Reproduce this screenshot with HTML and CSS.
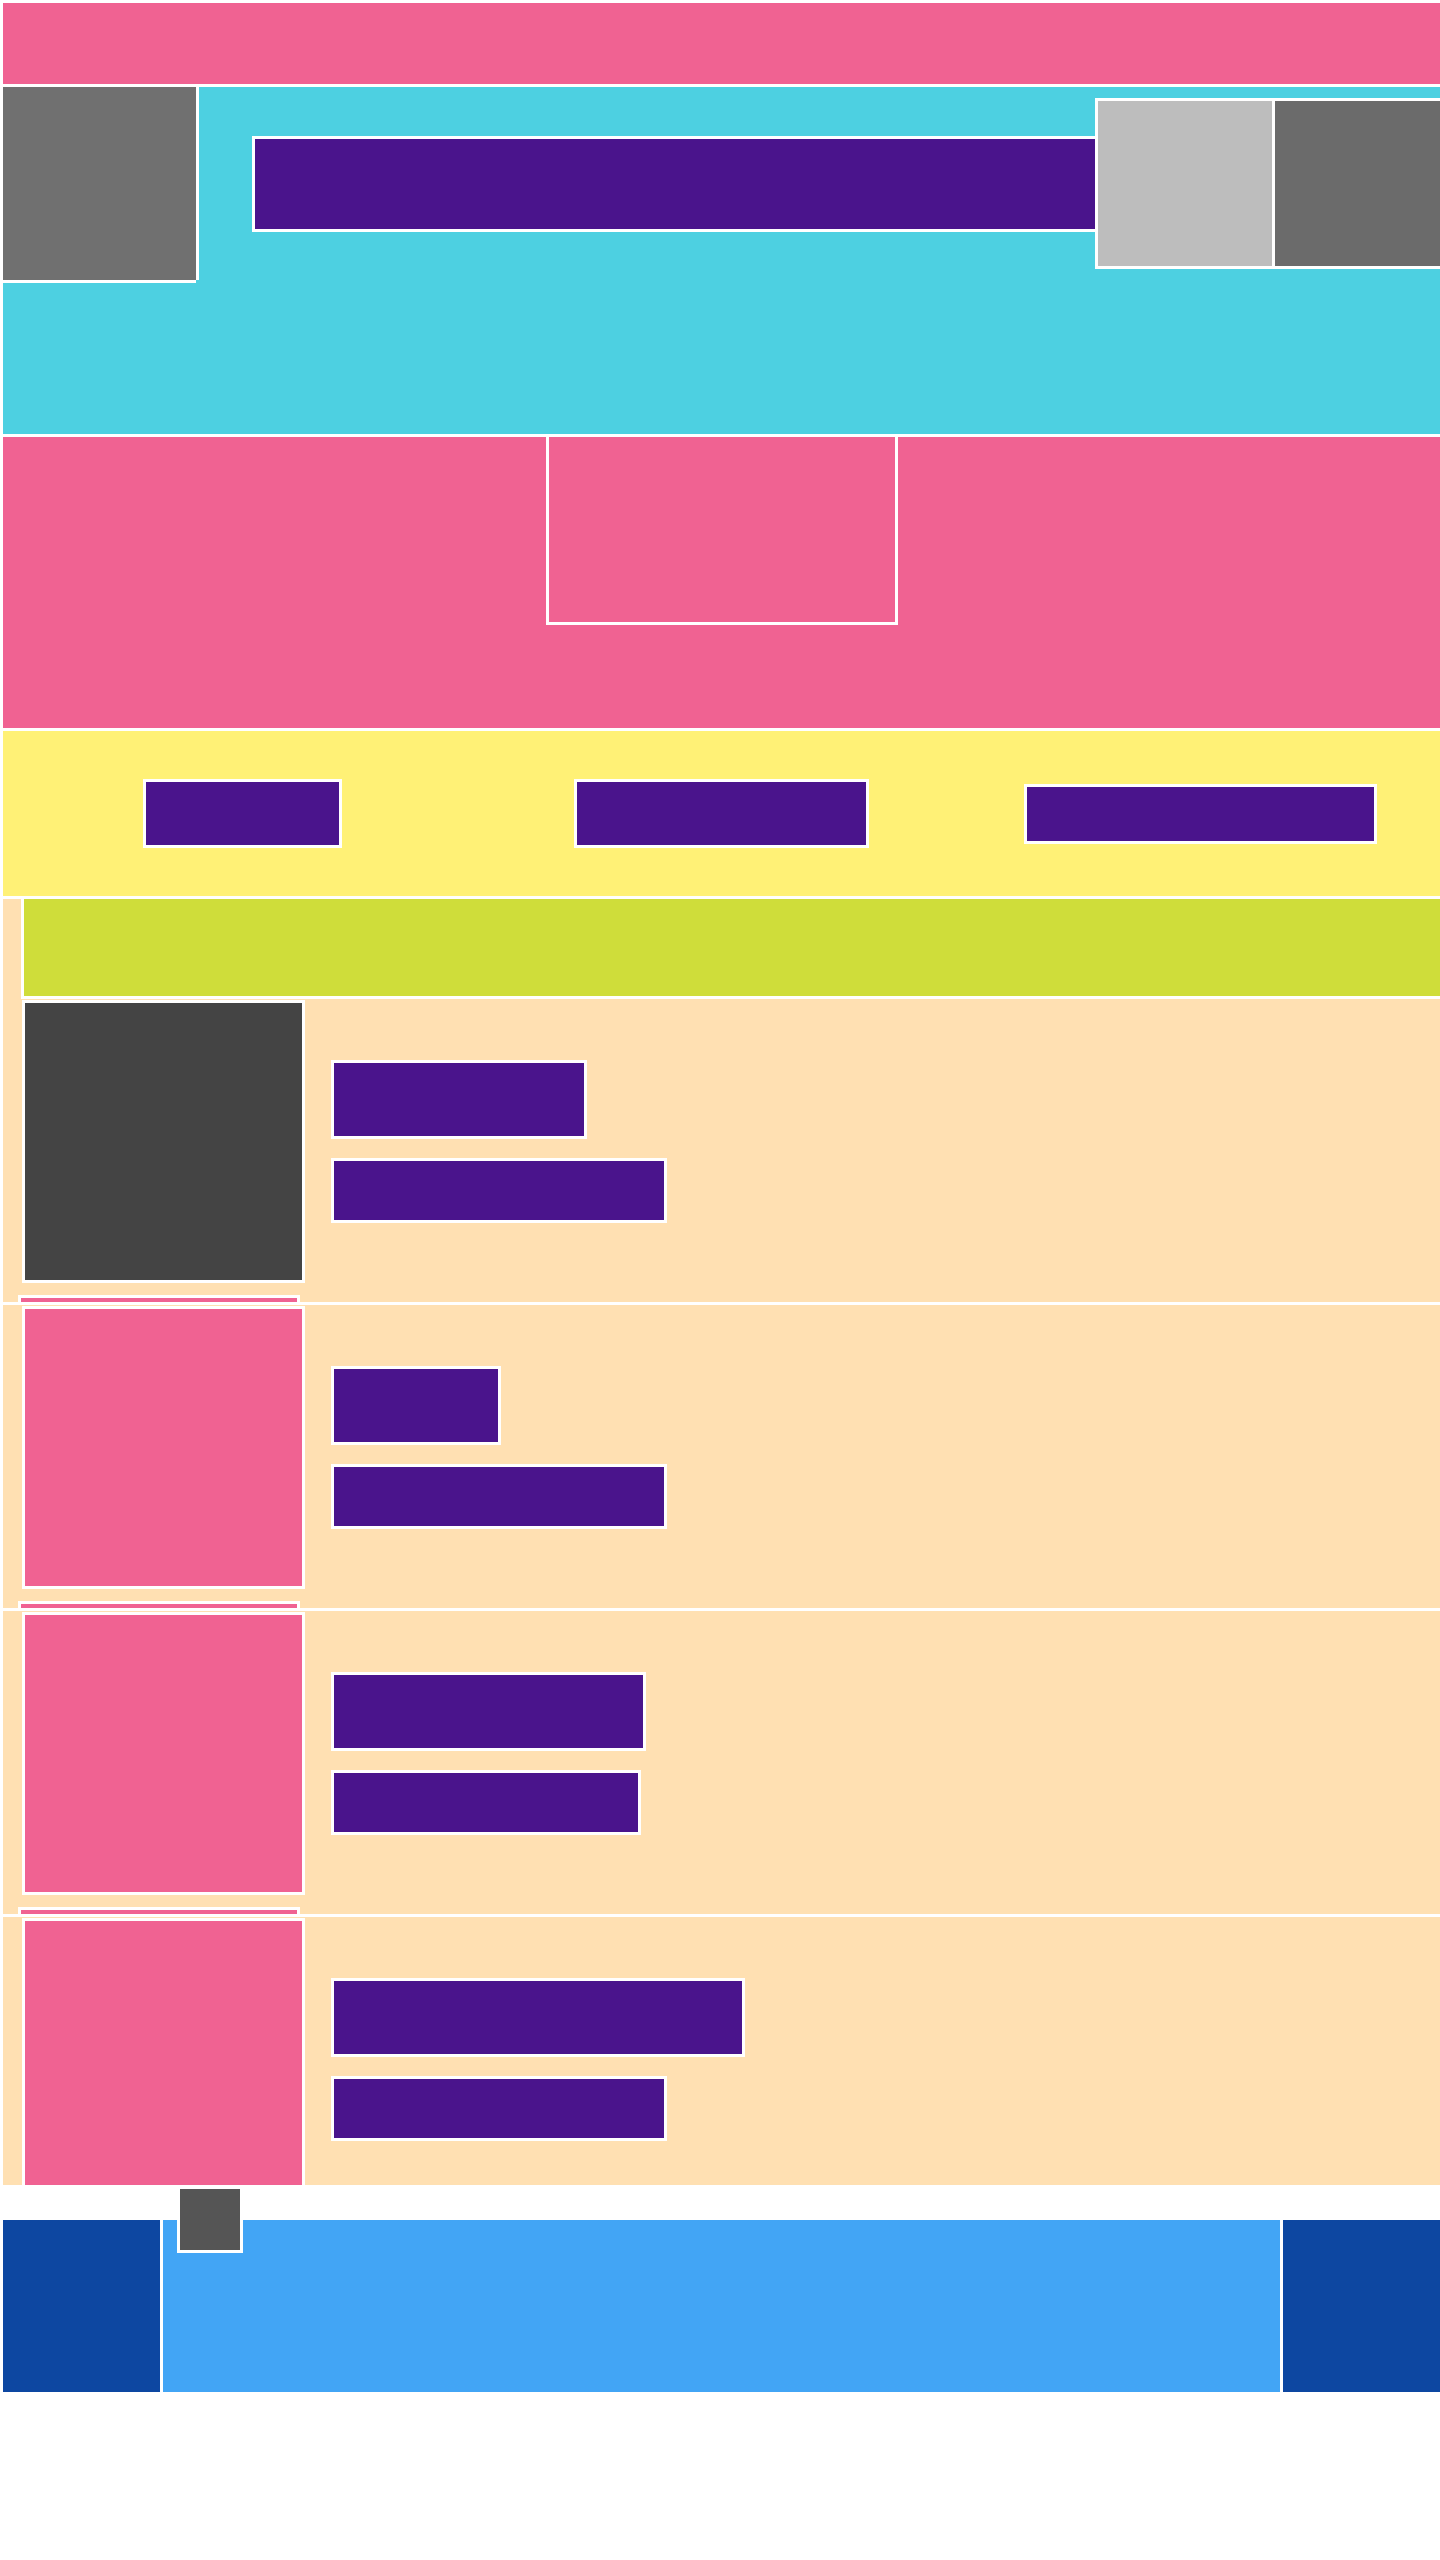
FILE: index.html
```html
<!DOCTYPE html>
<html lang="en">
<head>
    <meta charset="UTF-8">
    <title>Layout</title>
    <link rel="stylesheet" href="styles.css">
</head>
<body>
    <div class="page">
        <div class="topbar"></div>

        <header class="masthead">
            <div class="masthead-row">
                <div class="logo"></div>
                <div class="title"></div>
                <div class="actions">
                    <div class="action light"></div>
                    <div class="action dark"></div>
                </div>
            </div>
        </header>

        <section class="hero">
            <div class="hero-card"></div>
        </section>

        <nav class="links">
            <div class="link link-a"></div>
            <div class="link link-b"></div>
            <div class="link link-c"></div>
        </nav>

        <section class="list">
            <div class="list-head"></div>

            <div class="row">
                <div class="thumb dark"></div>
                <div class="lines">
                    <div class="line big w250"></div>
                    <div class="line w330"></div>
                </div>
            </div>

            <div class="row">
                <div class="thumb"></div>
                <div class="lines">
                    <div class="line big w164"></div>
                    <div class="line w330"></div>
                </div>
            </div>

            <div class="row">
                <div class="thumb"></div>
                <div class="lines">
                    <div class="line big w309"></div>
                    <div class="line w304"></div>
                </div>
            </div>

            <div class="row">
                <div class="thumb"></div>
                <div class="lines">
                    <div class="line big w408"></div>
                    <div class="line w330"></div>
                </div>
            </div>
        </section>

        <footer class="footer">
            <div class="footer-side"></div>
            <div class="footer-main"></div>
            <div class="footer-side"></div>
            <div class="footer-badge"></div>
        </footer>
    </div>
</body>
</html>
```

FILE: styles.css
```css
* {
    box-sizing: border-box;
}

body {
    margin: 0;
    background: #fff;
    font-family: "Liberation Sans", Arial, sans-serif;
}

.page {
    display: flex;
    flex-direction: column;
    gap: 3px;
    padding: 3px 0 0 3px;
}

.topbar {
    height: 81px;
    background: #f06292;
}

/* masthead */
.masthead {
    background: #4dd0e1;
    padding-bottom: 154px;
}

.masthead-row {
    display: flex;
    align-items: center;
    height: 193px;
}

.logo {
    width: 193px;
    height: 193px;
    flex-shrink: 0;
    background: #707070;
    box-shadow: 3px 0 0 #fff, 0 3px 0 #fff;
}

.title {
    width: 846px;
    height: 96px;
    margin-left: 56px;
    flex-shrink: 0;
    background: #4a148c;
    border: 3px solid #fff;
}

.actions {
    flex: 1;
    display: flex;
    gap: 3px;
    height: 171px;
    margin-left: -3px;
    background: #fff;
    border: 3px solid #fff;
    border-right: none;
}

.action.light {
    width: 174px;
    background: #bdbdbd;
}

.action.dark {
    flex: 1;
    background: #6b6b6b;
}

/* hero */
.hero {
    height: 291px;
    background: #f06292;
}

.hero-card {
    width: 352px;
    height: 188px;
    margin: 0 auto;
    background: #f06292;
    border: 3px solid #fff;
    border-top: none;
}

/* links */
.links {
    height: 165px;
    background: #fff176;
    display: grid;
    grid-template-columns: 1fr 1fr 1fr;
    align-items: center;
    justify-items: center;
}

.link {
    background: #4a148c;
    border: 3px solid #fff;
    height: 69px;
}

.link-a {
    width: 199px;
}

.link-b {
    width: 295px;
}

.link-c {
    width: 353px;
    height: 60px;
}

/* list */
.list {
    height: 1286px;
    overflow: hidden;
    background: #ffe0b2;
}

.list-head {
    height: 100px;
    margin-left: 18px;
    background: #cfdd3a;
    border-left: 3px solid #fff;
    border-bottom: 3px solid #fff;
}

.row {
    position: relative;
    display: flex;
    align-items: center;
    gap: 26px;
    padding: 1px 0 19px 19px;
    border-bottom: 3px solid #fff;
}

.row::after {
    content: "";
    position: absolute;
    left: 15px;
    bottom: 0;
    width: 276px;
    height: 4px;
    background: #f06292;
    border: 3px solid #fff;
    border-bottom: none;
}

.thumb {
    width: 283px;
    height: 283px;
    flex-shrink: 0;
    background: #f06292;
    border: 3px solid #fff;
}

.thumb.dark {
    background: #444;
}

.lines {
    display: flex;
    flex-direction: column;
    gap: 19px;
}

.line {
    height: 65px;
    background: #4a148c;
    border: 3px solid #fff;
}

.line.big {
    height: 79px;
}

.w164 { width: 170px; }
.w250 { width: 256px; }
.w304 { width: 310px; }
.w309 { width: 315px; }
.w330 { width: 336px; }
.w408 { width: 414px; }

/* footer */
.footer {
    position: relative;
    display: flex;
    gap: 3px;
    height: 172px;
    margin-top: 32px;
}

.footer-side {
    width: 157px;
    background: #0d47a1;
}

.footer-main {
    flex: 1;
    background: #42a5f5;
}

.footer-badge {
    position: absolute;
    top: -34px;
    left: 174px;
    width: 66px;
    height: 67px;
    background: #555;
    border: 3px solid #fff;
}
```
